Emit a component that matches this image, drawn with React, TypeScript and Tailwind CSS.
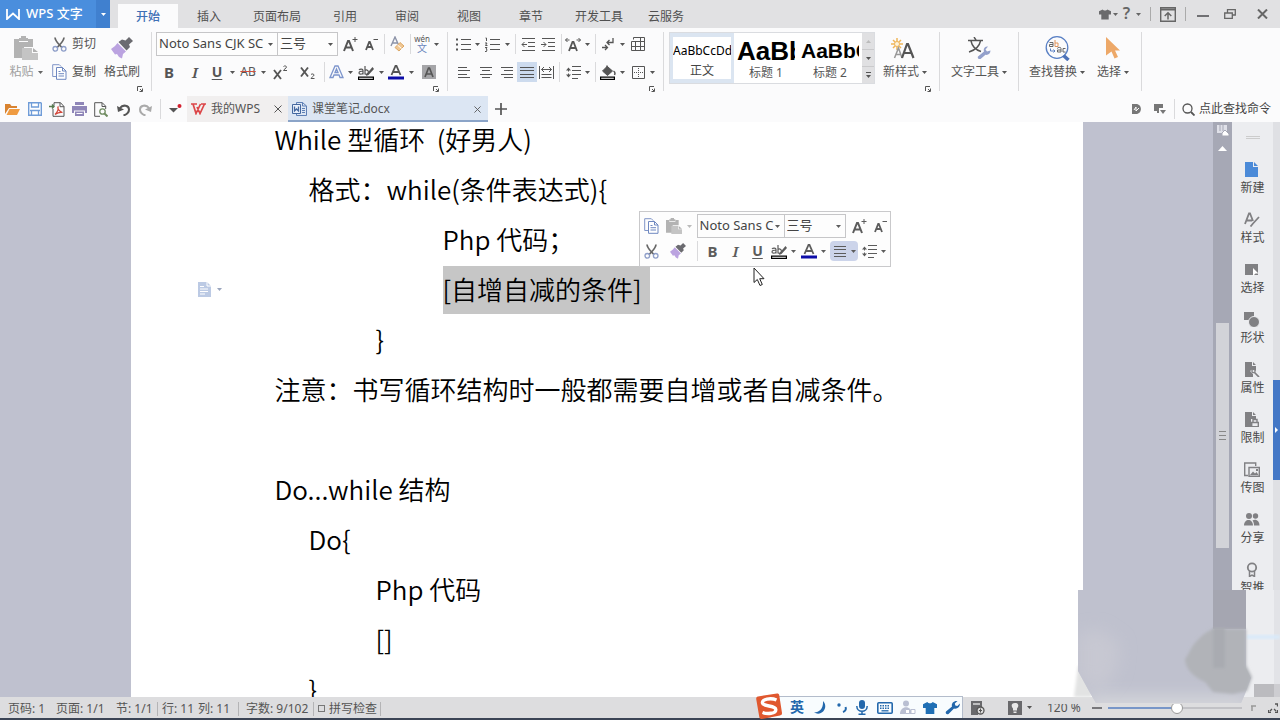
import React from "react";
import type { ReactNode } from "react";

const UI = "font-['Noto_Sans','Noto_Sans_CJK_SC',sans-serif]";

function Svg({ w = 16, h = 16, children, className = "" }: { w?: number; h?: number; children: ReactNode; className?: string }) {
  return (
    <svg width={w} height={h} viewBox={`0 0 ${w} ${h}`} fill="none" stroke="currentColor" className={`shrink-0 ${className}`} aria-hidden="true">
      {children}
    </svg>
  );
}

function Caret({ className = "" }: { className?: string }) {
  return (
    <Svg w={5} h={3} className={className}>
      <path d="M0 0h5L2.5 3z" fill="currentColor" stroke="none" />
    </Svg>
  );
}

function Tool({ label, w, children, className = "" }: { label: string; w: string; children: ReactNode; className?: string }) {
  return (
    <button type="button" aria-label={label} className={`flex h-5 shrink-0 items-center justify-center ${w} ${className}`}>
      {children}
    </button>
  );
}

function Drop({ label, w }: { label: string; w: string }) {
  return (
    <Tool label={label} w={w}>
      <Caret />
    </Tool>
  );
}

function Sep({ w }: { w: string }) {
  return (
    <span className={`flex h-5 shrink-0 justify-center ${w}`}>
      <span className="h-5 w-px bg-[#dadadc]" />
    </span>
  );
}

function GroupLine() {
  return <span className="mt-1 h-[59px] w-px shrink-0 bg-[#dadadc]" />;
}

function Launcher({ label }: { label: string }) {
  return (
    <button type="button" aria-label={label} className="absolute right-2 bottom-1">
      <Svg w={6} h={6}>
        <path d="M.5 5V.5H5M5.500 2.500v3h-3M3 3l2 2" strokeWidth="1" />
      </Svg>
    </button>
  );
}

/* ---------- icons ---------- */

const ScissorsIcon = ({ s = 15 }: { s?: number }) => (
  <svg width={s} height={s} viewBox="0 0 15 15" fill="none" aria-hidden="true">
    <path d="M3 .5c.3 2.500 2 5 4.500 7.500l2.500 2.600M12 .5c-.3 2.500-2 5-4.500 7.500L5 10.600" stroke="#666" strokeWidth="1.700" />
    <circle cx="3.300" cy="11.800" r="2.300" stroke="#8f9fc9" strokeWidth="1.300" />
    <circle cx="11.700" cy="11.800" r="2.300" stroke="#8f9fc9" strokeWidth="1.300" />
  </svg>
);

const CopyIcon = () => (
  <Svg w={15} h={16}>
    <path d="M4 12.500H.7V.7h6.600l2 2" stroke="#8096c8" />
    <path d="M4.500 3.500h6l3.500 3.500v8.300H4.500z" fill="#fff" stroke="#6f88c0" />
    <path d="M10.500 3.500V7H14M6.500 7.500h2M6.500 9.700h5.500M6.500 12h5.500" stroke="#6f88c0" />
  </Svg>
);

const PasteIcon = ({ s = 24 }: { s?: number }) => (
  <svg width={s} height={s} viewBox="0 0 24 24" aria-hidden="true">
    <path d="M0 3h5v3h9V3h5v8h-9v11H0z" fill="#b3b3b3" />
    <path d="M7 0h5v2h2v3H5V2h2z" fill="#b3b3b3" />
    <path d="M8 12h10v5h6v7H8z" fill="#c4c4c4" />
    <path d="M19 12l5 4h-5z" fill="#b0b0b0" />
  </svg>
);

const BrushIcon = ({ s = 22 }: { s?: number }) => (
  <svg width={s} height={s} viewBox="0 0 22 22" aria-hidden="true">
    <path d="M18 0l4 4-4 3.500 1 2.500-3.500 3.500L7.500 5l3.500-2.500 3.500 1z" fill="#6b6b70" />
    <path d="M6.500 6l8.500 8.500-3 2.500-1 4.500-3-1.500-2-3-2 .5L0 12l4-3z" fill="#bba3e0" />
  </svg>
);

const Lines = ({ d }: { d: string }) => (
  <Svg w={14} h={13}>
    <path d={d} strokeWidth="1" />
  </Svg>
);

const EraserIcon = () => (
  <Svg w={15} h={16}>
    <path d="M1 10L5 1l4 9M2.500 7h5" stroke="#8c93a8" strokeWidth="1.400" />
    <path d="M10 6.500l4 3.500-5 5-4-3.500z" fill="#f1c894" stroke="#dba868" />
    <path d="M7.500 9l4 3.500" stroke="#fff" />
  </Svg>
);

const LineSpacing = () => (
  <Svg w={15} h={13}>
    <path d="M6 .5h9M6 4.500h9M6 8.500h9M6 12.500h6" />
    <path d="M0 4.500L2.500 1.500 5 4.500M0 8.500l2.500 3L5 8.500" fill="currentColor" stroke="none" />
    <path d="M2.500 3.500v2M2.500 7.500v2" />
  </Svg>
);

const GrowIcon = () => (
  <Svg w={15} h={16}>
    <path d="M1 15L5 5h1l4 10M2.500 11.500h6" strokeWidth="2" />
    <path d="M9.500 3.500h5M12 1v5" />
  </Svg>
);

const ShrinkIcon = () => (
  <Svg w={13} h={14}>
    <path d="M1 13L4.200 5h.6L8 13M2 10h5" strokeWidth="1.800" />
    <path d="M8.500 2.500H13" />
  </Svg>
);

const HighlightIcon = () => (
  <Svg w={16} h={15}>
    <path d="M1 5c1-1.300 4-1.300 4 .6V9.500M5 6.300C2.500 6 1 6.700 1 8s3 1.800 4 0M7 1v8.500M7 5.500c1-1 3.400-.6 3.400 1.500S8.500 10 7 8.800" strokeWidth="1.200" />
    <path d="M14.500 2L9 8.500 8 11l2.500-1L16 4z" fill="currentColor" stroke="none" />
    <path d="M.6 12.100h14.800v2.300H.6z" fill="#fff" stroke="#000" strokeWidth="1.200" />
  </Svg>
);

const FontColorIcon = () => (
  <Svg w={16} h={15}>
    <path d="M3.500 10L7.500 1h1l4 9M5 7h6" strokeWidth="1.800" />
    <path d="M0 11.500h16v3H0z" fill="#0d0da8" stroke="none" />
  </Svg>
);

const CloseIcon = ({ s = 8 }: { s?: number }) => (
  <svg width={s} height={s} viewBox="0 0 8 8" stroke="currentColor" aria-hidden="true">
    <path d="M.5.5l7 7M7.500.5l-7 7" />
  </svg>
);

const ShirtIcon = ({ color, s = 13 }: { color: string; s?: number }) => (
  <svg width={s} height={s} viewBox="0 0 13 13" aria-hidden="true">
    <path d="M4 1c1 1.500 4 1.500 5 0l4 2v3.500h-2.500V12h-8V6.500H0V3z" fill={color} />
  </svg>
);

/* ---------- title bar ---------- */

const menuTabs = [
  { t: "插入", w: "w-[62px]" },
  { t: "页面布局", w: "w-[74px]" },
  { t: "引用", w: "w-[62px]" },
  { t: "审阅", w: "w-[62px]" },
  { t: "视图", w: "w-[62px]" },
  { t: "章节", w: "w-[62px]" },
  { t: "开发工具", w: "w-[74px]" },
  { t: "云服务", w: "w-[60px]" },
];

function TitleBar() {
  return (
    <header className="flex h-7 shrink-0 items-stretch bg-[#e1e1e3] text-[#505050]">
      <button type="button" className="flex w-24 items-center gap-1.5 bg-[#4a8edd] pl-1.5 text-[13px] font-medium text-white">
        <Svg w={14} h={11}>
          <path d="M1 0v10l6-5.500L13 10V0" strokeWidth="1.800" />
        </Svg>
        WPS 文字
      </button>
      <button type="button" aria-label="应用菜单" className="flex w-3.5 items-center justify-center bg-[#4080cf] text-white">
        <Caret />
      </button>
      <nav className="ml-2 flex items-stretch">
        <button type="button" className="mt-1 w-[60px] bg-[#fbfbfc] pt-0.5 font-medium text-[#3e6fb5]">开始</button>
        {menuTabs.map((m) => (
          <button key={m.t} type="button" className={`mt-1 pt-0.5 ${m.w}`}>
            {m.t}
          </button>
        ))}
      </nav>
      <div className="ml-auto flex items-center pr-1 text-[#666]">
        <Tool label="皮肤" w="w-3"><ShirtIcon color="#6a6a6c" /></Tool>
        <Drop label="皮肤选项" w="w-2" />
        <Tool label="帮助" w="w-[15px]" className="text-[16px] font-semibold">?</Tool>
        <Drop label="帮助选项" w="w-2" />
        <span className="mx-2 h-3.5 w-px bg-[#aaa]" />
        <Tool label="隐藏功能区" w="w-[18px]">
          <Svg w={16} h={15}>
            <path d="M.7.700h14.600v13.600H.7z" strokeWidth="1.400" />
            <path d="M.7 2.500h14.600" strokeWidth="2" />
            <path d="M8 12.500V6M4.700 9L8 5.800 11.300 9" strokeWidth="1.500" />
          </Svg>
        </Tool>
        <span className="mx-2 h-3.5 w-px bg-[#aaa]" />
        <Tool label="最小化" w="w-[18px]">
          <span className="mt-1 h-0.5 w-3 bg-[#707073]" />
        </Tool>
        <Tool label="还原" w="w-9">
          <Svg w={12} h={10}>
            <path d="M.7 4h7.600v5.300H.7zM3.500 4V.7h7.800V6H8.500" strokeWidth="1.300" />
          </Svg>
        </Tool>
        <Tool label="关闭" w="w-7">
          <Svg w={11} h={10}>
            <path d="M1 .5l9 9M10 .5l-9 9" strokeWidth="2" />
          </Svg>
        </Tool>
      </div>
    </header>
  );
}

/* ---------- ribbon ---------- */

function ClipboardGroup() {
  return (
    <div className="relative flex h-full w-[151px] shrink-0 pt-1.5 pl-2">
      <button type="button" className="flex w-9 flex-col items-center text-[#a0a0a0]">
        <span className="flex h-7 items-center"><PasteIcon /></span>
        <span className="flex items-center gap-1 whitespace-nowrap leading-5">
          粘贴 <Caret className="text-[#666]" />
        </span>
      </button>
      <div className="ml-2 flex flex-col gap-2">
        <button type="button" className="flex h-5 items-center gap-[5px] whitespace-nowrap"><ScissorsIcon />剪切</button>
        <button type="button" className="flex h-5 items-center gap-[5px] whitespace-nowrap"><CopyIcon />复制</button>
      </div>
      <button type="button" className="ml-2 flex flex-col items-center whitespace-nowrap">
        <span className="flex h-7 items-center"><BrushIcon /></span>
        <span className="leading-5">格式刷</span>
      </button>
      <Launcher label="剪贴板设置" />
    </div>
  );
}

function Combo({ label, value, w }: { label: string; value: string; w: string }) {
  return (
    <span className={`relative flex h-6 shrink-0 items-center border border-[#c6c6c8] bg-[#fdfdfd] ${w}`}>
      <select aria-label={label} className="h-full w-full appearance-none overflow-hidden bg-transparent pr-2.5 pl-0.5 text-[13px] text-[#444]">
        <option>{value}</option>
      </select>
      <Caret className="pointer-events-none absolute right-1" />
    </span>
  );
}

const glyph = "font-bold text-[15px] leading-none";

function FontGroup() {
  return (
    <div className="relative flex h-full w-[295px] shrink-0 flex-col gap-1.5 pt-1 pl-1">
      <div className="flex h-6 items-center">
        <Combo label="字体" value="Noto Sans CJK SC" w="w-[122px]" />
        <Combo label="字号" value="三号" w="-ml-px w-[61px]" />
        <Tool label="增大字号" w="w-6"><GrowIcon /></Tool>
        <Tool label="减小字号" w="w-[18px]"><ShrinkIcon /></Tool>
        <Sep w="w-2" />
        <Tool label="清除格式" w="w-[18px]"><EraserIcon /></Tool>
        <Sep w="w-2" />
        <Tool label="拼音指南" w="w-4" className="flex-col text-[8px]">
          <span className="leading-[8px]">wén</span>
          <span className="text-[10px] leading-[11px] text-[#6c86bd]">文</span>
        </Tool>
        <Drop label="拼音选项" w="w-3" />
      </div>
      <div className="flex h-5 items-center">
        <Tool label="加粗" w="w-[26px]" className={glyph}>B</Tool>
        <Tool label="倾斜" w="w-[26px]" className="font-['Noto_Serif','Liberation_Serif',serif] text-[15px] font-semibold italic">I</Tool>
        <Tool label="下划线" w="w-[18px]" className="text-[14px] font-bold underline underline-offset-2">U</Tool>
        <Drop label="下划线选项" w="w-3" />
        <Tool label="删除线" w="w-5" className="text-[12px] line-through decoration-[#d05040]">AB</Tool>
        <Drop label="删除线选项" w="w-2.5" />
        <Tool label="上标" w="w-6">
          <Svg w={15} h={15}>
            <path d="M1 5l7 9M8 5l-7 9" strokeWidth="1.900" />
            <path d="M10.500 1.500c1-1 3-.6 3 .6 0 1-3 2.500-3 3.400h3.500" />
          </Svg>
        </Tool>
        <Tool label="下标" w="w-[30px]">
          <Svg w={15} h={15}>
            <path d="M1 2.500l7 9M8 2.500l-7 9" strokeWidth="1.900" />
            <path d="M11 9.500c1-1 3-.6 3 .6 0 1-3 2.500-3 3.400h3.500" />
          </Svg>
        </Tool>
        <Sep w="w-1" />
        <Tool label="文字效果" w="w-5">
          <Svg w={15} h={14}>
            <path d="M1 12.500L6 1h3l5 11.500h-3l-1-2.500H5l-1 2.500zM6 7.500L7.500 4 9 7.500z" stroke="#7d95cc" strokeWidth="1.300" />
          </Svg>
        </Tool>
        <Drop label="文字效果选项" w="w-2" />
        <Tool label="突出显示" w="w-6"><HighlightIcon /></Tool>
        <Drop label="突出显示选项" w="w-[6px]" />
        <Tool label="字体颜色" w="w-6"><FontColorIcon /></Tool>
        <Drop label="字体颜色选项" w="w-[6px]" />
        <Tool label="字符底纹" w="w-[30px]">
          <Svg w={14} h={14}>
            <path d="M0 0h14v14H0z" fill="#a5a5a8" stroke="none" />
            <path d="M3 12L6.500 3h1L11 12M4.500 9h5" strokeWidth="1.700" />
          </Svg>
        </Tool>
      </div>
      <Launcher label="字体设置" />
    </div>
  );
}

function ParagraphGroup() {
  return (
    <div className="relative flex h-full w-[215px] shrink-0 flex-col gap-2 pt-1.5 pl-[5px]">
      <div className="flex h-5 items-center">
        <Tool label="项目符号" w="w-5">
          <Svg w={15} h={13}>
            <path d="M5 1.500h10M5 6.500h10M5 11.500h10" />
            <path d="M0 .5h2v2H0zM0 5.500h2v2H0zM0 10.500h2v2H0z" fill="currentColor" stroke="none" />
          </Svg>
        </Tool>
        <Drop label="项目符号选项" w="w-2" />
        <Tool label="编号" w="w-[22px]">
          <Svg w={15} h={15}>
            <path d="M5 2.500h10M5 7.500h10M5 12.500h10" />
            <path d="M.5 1h1v3M0 6h2L.5 8.500H2.500M0 10.500h2L1 12l1 .5-.5 2H0" />
          </Svg>
        </Tool>
        <Drop label="编号选项" w="w-2" />
        <Sep w="w-2" />
        <Tool label="减少缩进" w="w-[18px]">
          <Lines d="M1 .5h13M7 4.500h7M7 8.500h7M1 12.500h13M1 6.500h5M3.500 4L1 6.500 3.500 9" />
        </Tool>
        <Tool label="增加缩进" w="w-[22px]">
          <Lines d="M1 .5h13M7 4.500h7M7 8.500h7M1 12.500h13M0 6.500h5M2.500 4L5 6.500 2.500 9" />
        </Tool>
        <Sep w="w-1" />
        <Tool label="中文版式" w="w-5">
          <Svg w={16} h={15}>
            <path d="M4 14L7.500 5h1L12 14M5.500 11h5" strokeWidth="1.800" />
            <path d="M.5 3h4M2.500 1L.5 3l2 2M15.500 3h-4M13.500 1l2 2-2 2" />
          </Svg>
        </Tool>
        <Drop label="中文版式选项" w="w-2" />
        <Sep w="w-2" />
        <Tool label="显示标记" w="w-[18px]">
          <Svg w={12} h={13}>
            <path d="M11 0v4.500H5M7.500 2L5 4.500 7.500 7M0 9.500h5M3 7l2.500 2.500L3 12" strokeWidth="1.300" />
          </Svg>
        </Tool>
        <Drop label="显示标记选项" w="w-2.5" />
        <Tool label="制表位" w="w-[22px]">
          <Svg w={14} h={14}>
            <path d="M2.500 2.500V.5h11v13H.5v-9h13M4.500 4.500v9M9.500.5v13M.5 9.500h13" />
          </Svg>
        </Tool>
      </div>
      <div className="flex h-5 items-center">
        <Tool label="左对齐" w="w-[22px]"><Lines d="M1 1.500h9M1 4.500h12M1 8.500h9M1 11.500h12" /></Tool>
        <Tool label="居中" w="w-[22px]"><Lines d="M1 1.500h12M3 4.500h8M1 8.500h12M3 11.500h8" /></Tool>
        <Tool label="右对齐" w="w-5"><Lines d="M1 1.500h12M4 4.500h9M1 8.500h12M4 11.500h9" /></Tool>
        <Tool label="两端对齐" w="w-5" className="bg-[#cddbee]"><Lines d="M0 1.500h14M0 4.500h14M0 8.500h14M0 11.500h14" /></Tool>
        <Tool label="分散对齐" w="w-[18px]">
          <Svg w={15} h={13}>
            <path d="M.5 0v13M14.500 0v13M2.500 3.500h10M5 1L2.500 3.500 5 6M10 1l2.500 2.500L10 6M2.500 8.500h10M2.500 11.500h10" />
          </Svg>
        </Tool>
        <Sep w="w-2" />
        <Tool label="行距" w="w-5"><LineSpacing /></Tool>
        <Drop label="行距选项" w="w-2" />
        <Sep w="w-2" />
        <Tool label="底纹颜色" w="w-[18px]">
          <Svg w={16} h={15}>
            <path d="M7 1.500L2.500 6l5 4.500 5-4.500L8 2z" fill="currentColor" />
            <path d="M7 4V.5M13.500 6c1.500 1 1.500 3 1 4" strokeWidth="1.500" />
            <path d="M.6 12.100h13.800v2.300H.6z" fill="#fff" stroke="#000" strokeWidth="1.200" />
          </Svg>
        </Tool>
        <Drop label="底纹颜色选项" w="w-2.5" />
        <Tool label="边框" w="w-[22px]">
          <Svg w={13} h={13}>
            <path d="M.5.500h12v12H.5z" />
            <path d="M6.500 2v10M2 6.500h10" strokeDasharray="1 1" />
          </Svg>
        </Tool>
        <Drop label="边框选项" w="w-[6px]" />
      </div>
      <Launcher label="段落设置" />
    </div>
  );
}

function StylesGroup() {
  return (
    <div className="relative flex h-full w-[275px] shrink-0 pt-1 pl-[5px]">
      <div className="flex h-[52px] border border-[#dadce0] bg-white">
        <button type="button" className="flex w-16 flex-col items-center overflow-hidden border-x-[3px] border-y-4 border-[#dbe5f1] text-[#444]">
          <span className="w-full overflow-hidden whitespace-nowrap text-left leading-[28px] text-black">AaBbCcDd</span>
          <span className="leading-4">正文</span>
        </button>
        <button type="button" className="flex w-16 flex-col items-center px-[3px] text-[#555]">
          <span className="h-8 w-full overflow-hidden text-left font-['Liberation_Sans',Arial,sans-serif] text-[26px] leading-9 font-bold text-black">AaBb</span>
          <span className="leading-4">标题 1</span>
        </button>
        <button type="button" className="flex w-16 flex-col items-center px-[3px] text-[#555]">
          <span className="h-8 w-full overflow-hidden text-left font-['Liberation_Sans',Arial,sans-serif] text-[21px] leading-9 font-bold text-black">AaBbC</span>
          <span className="leading-4">标题 2</span>
        </button>
        <div className="flex w-3 flex-col bg-[#e0e0e2]">
          <button type="button" aria-label="上一行" className="flex flex-1 items-center justify-center text-[#bbb]"><Caret className="rotate-180" /></button>
          <button type="button" aria-label="下一行" className="flex flex-1 items-center justify-center border-y border-[#cacacc]"><Caret /></button>
          <button type="button" aria-label="更多样式" className="flex flex-1 flex-col items-center justify-center gap-0.5">
            <span className="h-px w-[5px] bg-[#555]" />
            <Caret />
          </button>
        </div>
      </div>
      <button type="button" className="ml-1 flex flex-col items-center whitespace-nowrap">
        <span className="mt-0.5 flex h-7 items-center">
          <Svg w={24} h={22}>
            <path d="M6 1v12M0 7h12M2 3l8 8M10 3l-8 8" stroke="#f0b659" strokeWidth="1.500" />
            <circle cx="6" cy="7" r="2.500" fill="#fdf3dc" stroke="#f0b659" />
            <path d="M3.500 21L7.500 11l3.500 10M5 17.500h5" stroke="#999" strokeWidth="1.500" />
            <path d="M11 21l5-14h1l5.500 14M12.500 16h8" strokeWidth="2.200" />
          </Svg>
        </span>
        <span className="flex items-center gap-[3px] pl-1 leading-5">新样式<Caret /></span>
      </button>
      <Launcher label="样式设置" />
    </div>
  );
}

function BigButton({ text, icon, w }: { text: string; icon: ReactNode; w: string }) {
  return (
    <button type="button" className={`flex shrink-0 flex-col items-center whitespace-nowrap pt-1.5 ${w}`}>
      <span className="flex h-7 items-center">{icon}</span>
      <span className="flex items-center gap-[3px] leading-5">{text}<Caret /></span>
    </button>
  );
}

function Ribbon() {
  return (
    <section className="flex h-[68px] shrink-0 overflow-hidden bg-[#fbfbfc] text-[#555]">
      <ClipboardGroup />
      <GroupLine />
      <FontGroup />
      <GroupLine />
      <ParagraphGroup />
      <GroupLine />
      <StylesGroup />
      <GroupLine />
      <BigButton
        text="文字工具"
        w="w-[78px]"
        icon={
          <Svg w={24} h={22}>
            <path d="M1 3.500h15M7 0l2 3M13.500 4c-1 5-5 9-11.500 11M4 4c1 5 5 9 10 10.500" strokeWidth="1.400" />
            <path d="M11 19.500l6-5c-1-3 1-5.500 4-5l-2.500 3 1.500 2 3.500-1c0 3-2.500 5-5 4.300l-5 4.200c-1.500 1-3.500-1-2.500-2.500z" fill="#93a0cb" stroke="none" />
          </Svg>
        }
      />
      <GroupLine />
      <BigButton
        text="查找替换"
        w="w-[76px]"
        icon={
          <Svg w={25} h={25}>
            <circle cx="12" cy="11.500" r="10.800" stroke="#587fc4" strokeWidth="1.300" />
            <path d="M18.500 19.500l5 4.500" stroke="#4e73b8" strokeWidth="3.500" />
            <path d="M4.500 6.500h3.500v4H4.500V8.500H8M12.500 12.500c-.5-1.500 4-1.500 3.500 0v3.500h-3.500v-2H16M20.500 12.500H18V16h2.500" stroke="#666" />
            <path d="M10 4v6.500h3V7h-3" stroke="#e2955c" />
            <path d="M5.500 12.500v2.500H10M8.500 13.500L10 15l-1.500 1.500" stroke="#587fc4" />
          </Svg>
        }
      />
      <BigButton
        text="选择"
        w="w-[36px]"
        icon={
          <Svg w={14} h={22}>
            <path d="M0 0l14 13.500H9l3 6.500-3.500 1.500-3-7L0 18.500z" fill="#eda868" stroke="none" />
          </Svg>
        }
      />
      <span className="w-2.5 shrink-0" />
      <GroupLine />
    </section>
  );
}

/* ---------- quick access + document tabs ---------- */

function QuickBar() {
  return (
    <section className="flex h-[26px] shrink-0 items-stretch bg-[#fbfbfc] text-[#555]">
      <div className="flex items-center pl-px">
        <Tool label="打开" w="w-[23px]">
          <Svg w={15} h={12}>
            <path d="M0 11V1h5l1.500 2H12v2H4z" fill="#d98330" stroke="none" />
            <path d="M1.500 12L4.500 6H15l-3 6z" fill="#ef9b42" stroke="none" />
          </Svg>
        </Tool>
        <Tool label="保存" w="w-[22px]">
          <Svg w={14} h={14}>
            <path d="M.7.700h12l.6.600v12H.7z" fill="#fff" stroke="#6f9cd8" strokeWidth="1.400" />
            <path d="M3.500 1v4h7V1M2 8.500h10M3.500 8.500V13M10.500 8.500V13" stroke="#6f9cd8" strokeWidth="1.300" />
          </Svg>
        </Tool>
        <Tool label="输出为PDF" w="w-[22px]">
          <Svg w={16} h={15}>
            <path d="M4 7v7.300h11V4.500L11.500.7H5v3" />
            <path d="M11 .7v4h4" />
            <path d="M0 4.500h5M3 2.500l2 2-2 2" stroke="#567a50" strokeWidth="1.400" />
            <path d="M6 12.500c2-2 3.500-5.500 3-7.500-1 1 1.500 5 4.500 5.500-2-.5-5 .3-7.500 2" stroke="#d3473a" strokeWidth="1.200" />
          </Svg>
        </Tool>
        <Tool label="打印" w="w-[22px]">
          <Svg w={15} h={14}>
            <path d="M3 0h9v3H3zM0 4h15v7h-2V8.500H2V11H0zM3 9.500h9V14H3z" fill="#8f86b8" stroke="none" />
            <path d="M4.500 11.500h6" stroke="#fff" />
          </Svg>
        </Tool>
        <Tool label="打印预览" w="w-[22px]">
          <Svg w={14} h={15}>
            <path d="M6 14.300H.7V.7h7.500l3.500 3.500V7" />
            <path d="M8 .7v3.800h3.700" />
            <circle cx="8.500" cy="9.500" r="2.700" stroke="#718d62" strokeWidth="1.300" />
            <path d="M10.500 11.500L13.500 14.500" stroke="#718d62" strokeWidth="2" />
          </Svg>
        </Tool>
        <Tool label="撤销" w="w-[22px]">
          <Svg w={13} h={13}>
            <path d="M3 5c3-4 9-2.500 9 1.500 0 3-2.500 5-5.500 6" strokeWidth="2" />
            <path d="M0 3l1 6 6-2.500z" fill="currentColor" stroke="none" />
          </Svg>
        </Tool>
        <Tool label="恢复" w="w-[22px]" className="text-[#aaa]">
          <Svg w={13} h={13}>
            <path d="M10 5C7 1 1 2.500 1 6.500c0 3 2.500 5 5.500 6" strokeWidth="2" />
            <path d="M13 3l-1 6-6-2.500z" fill="currentColor" stroke="none" />
          </Svg>
        </Tool>
        <Sep w="w-2" />
        <Tool label="自定义快速访问" w="w-[23px]">
          <Svg w={13} h={10}>
            <path d="M0 4h9L4.500 8.500z" fill="currentColor" stroke="none" />
            <circle cx="10.500" cy="2" r="2" fill="#d3202f" stroke="none" />
          </Svg>
        </Tool>
      </div>
      <div className="flex w-[101px] items-center bg-[#f1efef] pl-1">
        <Svg w={16} h={12}>
          <path d="M0 1h6M10 1h5M2 1l3 9.500L9.500 1M6 4l3 6.500L13.500 1" stroke="#dc4648" strokeWidth="1.700" />
        </Svg>
        <a href="#wps" className="ml-1 flex-1 whitespace-nowrap">我的WPS</a>
        <button type="button" aria-label="关闭我的WPS" className="mr-1.5"><CloseIcon /></button>
      </div>
      <div className="flex w-[200px] items-center border-b-2 border-[#8ba4c8] bg-[#dce6f3] pt-0.5 pl-1">
        <Svg w={15} h={14}>
          <path d="M4.500 2.500V.5h6l4 3.500v9.500h-10v-2M10.500.5V4h4M10 6.500h3M10 8.500h3M10 10.500h3" stroke="#5d7fb5" />
          <path d="M.5 2.500h8v9h-8z" fill="#eaf1fb" stroke="#44689f" />
          <path d="M2.500 4.500v4.500l2-2 2 2V4.500" stroke="#44689f" strokeWidth="1.300" />
        </Svg>
        <a href="#doc" className="ml-[5px] flex-1 whitespace-nowrap">课堂笔记.docx</a>
        <button type="button" aria-label="关闭文档" className="mr-[7px]"><CloseIcon s={7} /></button>
      </div>
      <Tool label="新建标签" w="w-[26px]" className="self-center">
        <Svg w={12} h={12}><path d="M6 0v12M0 6h12" strokeWidth="1.700" /></Svg>
      </Tool>
      <div className="ml-auto flex items-center pr-[7px]">
        <Tool label="云文档" w="w-7">
          <Svg w={9} h={10}>
            <path d="M0 0h4c6.500 0 6.500 10 0 10H0z" fill="#777" stroke="none" />
            <path d="M2 6l2-3v4l3-3" stroke="#fff" />
          </Svg>
        </Tool>
        <Tool label="同步" w="w-5">
          <Svg w={12} h={11}>
            <path d="M0 0h9v4H5v5H3V7H0zM6 6h6l-3 4z" fill="#777" stroke="none" />
          </Svg>
        </Tool>
        <Sep w="w-2" />
        <label className="flex items-center gap-1 pl-1">
          <Svg w={13} h={13}>
            <circle cx="5.500" cy="5.500" r="4.500" strokeWidth="1.300" />
            <path d="M9 9l3.500 3.500" strokeWidth="1.800" />
          </Svg>
          <input aria-label="查找命令" placeholder="点此查找命令" className="w-[74px] bg-transparent outline-none placeholder:text-[#444]" />
        </label>
      </div>
    </section>
  );
}

/* ---------- document ---------- */

function MiniToolbar() {
  return (
    <div className="absolute top-[89px] left-[508px] flex w-[252px] flex-col gap-0.5 border border-[#c9c9cb] bg-[#fdfdfd] pt-0.5 pb-1 text-xs font-normal text-[#5c5c5c]">
      <div className="flex h-6 items-center">
        <Tool label="复制" w="w-6"><CopyIcon /></Tool>
        <Tool label="粘贴" w="w-5"><PasteIcon s={16} /></Tool>
        <span className="flex w-3 justify-center text-[#bbb]"><Caret /></span>
        <Combo label="浮动字体" value="Noto Sans C" w="ml-px w-[88px]" />
        <Combo label="浮动字号" value="三号" w="-ml-px w-[62px]" />
        <Tool label="增大字号" w="w-6" className="ml-0.5"><GrowIcon /></Tool>
        <Tool label="减小字号" w="w-[18px]"><ShrinkIcon /></Tool>
      </div>
      <div className="flex h-[22px] items-center">
        <Tool label="剪切" w="w-6"><ScissorsIcon /></Tool>
        <Tool label="格式刷" w="w-7"><BrushIcon s={16} /></Tool>
        <Sep w="w-3" />
        <Tool label="加粗" w="w-[18px]" className={glyph}>B</Tool>
        <Tool label="倾斜" w="w-7" className="font-['Noto_Serif','Liberation_Serif',serif] text-[15px] font-semibold italic">I</Tool>
        <Tool label="下划线" w="w-4" className="text-[14px] font-bold underline underline-offset-2">U</Tool>
        <Tool label="突出显示" w="w-[26px]"><HighlightIcon /></Tool>
        <Drop label="突出显示选项" w="w-1" />
        <Tool label="字体颜色" w="w-[26px]"><FontColorIcon /></Tool>
        <Drop label="字体颜色选项" w="w-1" />
        <span className="ml-1 flex items-center rounded-sm bg-[#ccd4ea]">
          <Tool label="对齐" w="w-5"><Lines d="M1 1.500h12M1 4.500h12M1 8.500h12M1 11.500h12" /></Tool>
          <Drop label="对齐选项" w="w-2" />
        </span>
        <Tool label="行距" w="w-6"><LineSpacing /></Tool>
        <Drop label="行距选项" w="w-1" />
      </div>
      <Svg w={12} h={20} className="absolute top-[55px] left-[113px]">
        <path d="M1 1v14.500l3.300-3 2.700 6 2.300-1-2.600-5.800H11z" fill="#fff" stroke="#222" />
      </Svg>
    </div>
  );
}

function Page() {
  return (
    <main className={`relative w-full max-w-[952px] overflow-hidden bg-white ${UI}`}>
      <article className="-mt-2 pr-20 pl-36 font-['Noto_Sans_CJK_SC',sans-serif] text-[26px] leading-[50px] font-[350] whitespace-pre text-black">
        <p>While 型循环  (好男人)</p>
        <p className="pl-[34px]">格式：while(条件表达式){"{"}</p>
        <p className="pl-[168px]">Php 代码；</p>
        <p className="pl-[168px]">
          <span className="mt-0.5 inline-block h-12 bg-[#c6c6c6] pr-2 align-top leading-[46px]">[自增自减的条件]</span>
        </p>
        <p className="pl-[101px]">{"}"}</p>
        <p>注意：书写循环结构时一般都需要自增或者自减条件。</p>
        <p>&nbsp;</p>
        <p>Do...while 结构</p>
        <p className="pl-[34px]">Do{"{"}</p>
        <p className="pl-[101px]">Php 代码</p>
        <p className="pl-[101px]">[]</p>
        <p className="pl-[34px]">{"}"}</p>
      </article>
      <button type="button" aria-label="段落布局" className="absolute top-[160px] left-[67px] flex items-center gap-1.5 text-[#9aa5bd]">
        <Svg w={13} h={15}>
          <path d="M0 0h9l4 4v11H0z" fill="#bccae4" stroke="none" />
          <path d="M2 4.500h4M2 7h8M2 9.500h8M2 12h5M9 0v4h4" stroke="#fff" />
        </Svg>
        <Caret />
      </button>
      <MiniToolbar />
    </main>
  );
}

const sideItems: { t: string; icon: ReactNode }[] = [
  { t: "新建", icon: <path d="M1 0h8v5h5v10H1zM10 0l4 4h-4z" fill="#4b8ad8" stroke="none" /> },
  { t: "样式", icon: <path d="M1 12L5 1.500h1L9 9M2.500 8.500H8M15 5l-6 6.500-2.500 3" strokeWidth="1.800" /> },
  { t: "选择", icon: <><path d="M1 2h13v11H1z" fill="currentColor" stroke="none" /><path d="M9 6l5.500 5.500h-3l-2.500 2.500z" fill="#fff" stroke="none" /></> },
  { t: "形状", icon: <><path d="M0 0h10v8H0z" fill="currentColor" stroke="none" /><circle cx="10" cy="10" r="5.500" fill="currentColor" stroke="#ecedf0" /></> },
  { t: "属性", icon: <><path d="M1 0h7v4h4v5l-3-2-3 2 3 3v3H1zM9 0l3 3H9z" fill="currentColor" stroke="none" /><path d="M15 15l-4.500-4.500" strokeWidth="1.700" /><circle cx="9.500" cy="9" r="1.600" strokeWidth="1.300" /></> },
  { t: "限制", icon: <><path d="M1 0h7v4h4v3H7v8H1zM9 0l3 3H9z" fill="currentColor" stroke="none" /><path d="M7.700 10.500h6.600v4.200H7.700zM9 10V7.500h4V10" strokeWidth="1.400" /></> },
  { t: "传图", icon: <><path d="M4 13.500H.7V1h11v3" strokeWidth="1.400" /><path d="M5 5.500h10.300v8.800H5z" strokeWidth="1.400" /><path d="M6 13l3-3.500 2 2 1.500-1.500 2 3zM12 7h2v2h-2z" fill="currentColor" stroke="none" /></> },
  { t: "分享", icon: <><circle cx="5" cy="4" r="3" fill="currentColor" stroke="none" /><circle cx="11.500" cy="4" r="2.700" fill="currentColor" stroke="none" /><path d="M0 13.500C0 6 9 6 9 13.500zM10 13.500c0-2-.5-4-1.500-5C12 6.500 15.500 9 15.500 13.500z" fill="currentColor" stroke="none" /></> },
  { t: "智推", icon: <><circle cx="8" cy="5.500" r="4.200" strokeWidth="1.800" /><path d="M5.500 9v5.500l2.500-1.500 2.500 1.500V9" strokeWidth="1.500" /></> },
];

function ScrollBar() {
  return (
    <div className="flex w-[19px] shrink-0 flex-col items-center bg-[#a6a8b5] pt-0.5 text-white">
      <Tool label="导航" w="w-4" className="h-[14px]">
        <Svg w={12} h={12}>
          <path d="M0 0h10v8H0z" fill="#dfe0e8" stroke="none" />
          <path d="M3 0v6M6 0v6" stroke="#a6a8b5" />
          <path d="M5 11V8l3-3 4 4v2z" fill="#fff" stroke="#a6a8b5" />
        </Svg>
      </Tool>
      <button type="button" aria-label="向上滚动" className="mt-1 p-1">
        <Svg w={9} h={5}><path d="M0 5L4.500 0 9 5z" fill="#fff" stroke="none" /></Svg>
      </button>
      <div className="flex w-full flex-1 flex-col items-center">
        <span className="flex-[168]" />
        <span className="flex w-[13px] flex-[226] flex-col items-center justify-center gap-[3px] bg-[#d2d3d8]">
          <span className="h-px w-[7px] bg-[#888]" />
          <span className="h-px w-[7px] bg-[#888]" />
          <span className="h-px w-[7px] bg-[#888]" />
        </span>
        <span className="flex-[149]" />
      </div>
    </div>
  );
}

function SidePanel() {
  return (
    <>
      <aside className="flex w-[41px] shrink-0 flex-col items-center overflow-hidden bg-[#ecedf0] pt-3.5 text-[#555]">
        <span className="mb-[22px] h-[3px] w-3.5 shrink-0 border-y border-[#ccc]" />
        {sideItems.map((s) => (
          <button key={s.t} type="button" className="flex h-[50px] shrink-0 flex-col items-center text-[#808083]">
            <Svg w={16} h={15} className="mt-px">{s.icon}</Svg>
            <span className="mt-0.5 leading-[18px] text-[#4a4a4a]">{s.t}</span>
          </button>
        ))}
      </aside>
      <div className="flex w-[7px] shrink-0 flex-col bg-[#dfe0e4]">
        <span className="flex-[258]" />
        <button type="button" aria-label="展开面板" className="flex flex-[100] items-center justify-center bg-[#4377c6]">
          <Svg w={3} h={6}><path d="M0 0l3 3-3 3z" fill="#fff" stroke="none" /></Svg>
        </button>
        <span className="flex-[217]" />
      </div>
    </>
  );
}

/* ---------- status bar ---------- */

const Tick = () => <span className="h-3.5 w-px bg-[#b4b4b6]" />;

function InputMethodBar() {
  return (
    <div className="relative flex h-[22px] w-[192px] shrink-0 items-center self-end border-t border-r border-[#b3bccb] bg-[#f8fcfe] pl-[18px] text-[#2368ac]">
      <Svg w={28} h={26} className="absolute -top-1 -left-4">
        <path d="M3 3.500L22 .5c1.500 0 2 .5 2.300 2L27 20c0 1.500-.5 2-2 2.500L7 26c-1.500 0-2.500-.5-2.700-2L1.200 6c0-1.500.5-2.200 1.800-2.500z" fill="#e0582f" stroke="none" />
        <path d="M21.500 7C16 4.500 6.500 6 7.500 10s13 2 13.300 6.500c.2 4.500-8.800 4.500-13.300 3" stroke="#fff" strokeWidth="3.400" />
      </Svg>
      <Tool label="中英文切换" w="w-4" className="text-[14px] font-bold">英</Tool>
      <Tool label="全半角" w="w-[30px]">
        <Svg w={13} h={13}><path d="M9 0c6 6-1 16-9 11.500C6 11.500 9.500 7 9 0z" fill="currentColor" stroke="none" /></Svg>
      </Tool>
      <Tool label="标点" w="w-[14px]">
        <Svg w={10} h={11}>
          <circle cx="2" cy="3" r="1.700" fill="currentColor" stroke="none" />
          <path d="M8.500 5c.8 2 .2 4-2.500 5" strokeWidth="2" />
        </Svg>
      </Tool>
      <Tool label="语音" w="w-[26px]">
        <Svg w={12} h={15}>
          <rect x="3" y="0" width="6" height="9" rx="3" fill="currentColor" stroke="none" />
          <path d="M.8 6c0 7 10.400 7 10.400 0M6 11v3M2.500 14.200h7" strokeWidth="1.500" />
        </Svg>
      </Tool>
      <Tool label="软键盘" w="w-5">
        <Svg w={16} h={12}>
          <rect x=".8" y=".8" width="14.400" height="10.400" rx="1" strokeWidth="1.600" />
          <path d="M3 3.800h10M3 6.200h10" strokeWidth="1.500" strokeDasharray="1.500 1" />
          <path d="M4.500 8.800h7" strokeWidth="1.300" />
        </Svg>
      </Tool>
      <Tool label="用户" w="w-[26px]" className="text-[#b9bfd2]">
        <Svg w={16} h={15}>
          <circle cx="6" cy="3.500" r="3" fill="currentColor" stroke="none" />
          <path d="M0 14C0 5 12 5 12 14z" fill="currentColor" stroke="none" />
          <path d="M5.500 9.500h4v4h-4zM11 9.500h4v4h-4z" fill="#fff" />
        </Svg>
      </Tool>
      <Tool label="皮肤" w="w-[18px]"><ShirtIcon color="#1f6fb5" s={14} /></Tool>
      <Tool label="工具箱" w="w-[26px]">
        <Svg w={15} h={15}>
          <path d="M1 11.500l6-5C6 3 9 .5 12.500 1L9.800 3.500l.5 2 2 .5L15 3.500c0 3.500-3 6-6 5L3.500 14c-2 1-3.500-1-2.500-2.500z" fill="currentColor" stroke="none" />
        </Svg>
      </Tool>
    </div>
  );
}

function StatusBar() {
  return (
    <footer className="flex h-[23px] shrink-0 items-center border-b-2 border-[#3b4455] bg-[#dddddf] text-[#555]">
      <div className="flex items-center whitespace-nowrap pt-0.5 pl-2">
        <span className="w-12">页码: 1</span>
        <span className="w-[60px]">页面: 1/1</span>
        <span className="w-[41px]">节: 1/1</span>
        <Tick />
        <span className="w-10 pl-1">行: 11</span>
        <span className="w-10">列: 11</span>
        <Tick />
        <span className="w-[74px] pl-[7px]">字数: 9/102</span>
        <Tick />
        <label className="flex items-center gap-1 pr-[3px] pl-1">
          <input type="checkbox" className="size-[7px] appearance-none border border-[#777]" />
          拼写检查
        </label>
        <Tick />
      </div>
      <div className="ml-auto flex h-full items-center">
        <InputMethodBar />
        <Tool label="文档校对" w="w-[30px]">
          <Svg w={14} h={14}>
            <path d="M0 0h11v6H7v8H0z" fill="#69696c" stroke="none" />
            <path d="M2 3h7" stroke="#ddd" strokeWidth="1.500" />
            <circle cx="9.500" cy="9.500" r="3.500" strokeWidth="1.300" fill="#ddd" />
            <path d="M9.500 7.500v4M8 9.500h3" />
          </Svg>
        </Tool>
        <Tool label="护眼模式" w="w-11">
          <Svg w={14} h={14}>
            <path d="M0 0h14v14H0z" fill="#69696c" stroke="none" />
            <path d="M7 2c4 0 4 3.500 2 5.500v2H5v-2C3 5.500 3 2 7 2zM5.500 10.500h3V12h-3z" fill="#e8e8e8" stroke="none" />
          </Svg>
        </Tool>
        <Caret className="-ml-2.5" />
        <span className="w-[54px] pl-[15px] whitespace-nowrap">120 %</span>
        <Tool label="缩小" w="w-[22px]"><span className="h-0.5 w-2.5 bg-[#77777a]" /></Tool>
        <input
          type="range"
          aria-label="显示比例"
          min={0}
          max={100}
          defaultValue={52}
          className="h-4 w-[134px] appearance-none bg-[linear-gradient(to_right,#7896c8_52%,#c2c2c6_52%)] bg-[length:100%_2px] bg-center bg-no-repeat [&::-webkit-slider-thumb]:size-3 [&::-webkit-slider-thumb]:appearance-none [&::-webkit-slider-thumb]:rounded-full [&::-webkit-slider-thumb]:border [&::-webkit-slider-thumb]:border-[#999] [&::-webkit-slider-thumb]:bg-white"
        />
        <Tool label="放大" w="w-6">
          <Svg w={6} h={6}><path d="M0 1h5M1 1v5" stroke="#999" strokeWidth="1.500" /></Svg>
        </Tool>
        <Tool label="全屏" w="w-3.5">
          <Svg w={10} h={10}>
            <path d="M0 9.500h3M.5 10V7M10 9.500H7M9.500 10V7M2 8l2-2M8 8L6 6M7 1h2.500v2.500M3 1" strokeWidth="1.300" />
          </Svg>
        </Tool>
      </div>
    </footer>
  );
}

/* Smudged patch in the lower right corner, drawn above the page and side panel. */
function Smudge() {
  return (
    <svg width="240" height="130" viewBox="0 0 240 130" className="pointer-events-none absolute right-0 bottom-0" aria-hidden="true">
      <defs>
        <filter id="soft" x="-20%" y="-20%" width="140%" height="140%">
          <feGaussianBlur stdDeviation="1.500" />
        </filter>
        <filter id="softer" x="-50%" y="-50%" width="200%" height="200%">
          <feGaussianBlur stdDeviation="8" />
        </filter>
        <clipPath id="patch">
          <path d="M38 0h168v78l5 10-6 16-4 9H56l-6-10-12-22z" />
        </clipPath>
      </defs>
      <path d="M38 0h14v107H38z" fill="#fff" />
      <path d="M206 0h34v107h-34z" fill="#ecedf0" />
      <path d="M234 0h6v107h-6z" fill="#e2e3e7" />
      <path d="M206 45h34v4h-34z" fill="#d9eafa" filter="url(#soft)" />
      <path d="M214 94h20v13h-20z" fill="#bbbbbf" />
      <path d="M234 94h6v13h-6z" fill="#cdcdd1" />
      <path d="M4 107h202v7H4z" fill="#dddddf" />
      <path d="M38 76h14v31H34z" fill="#e2e3e3" filter="url(#soft)" />
      <g clipPath="url(#patch)">
        <path d="M38 0h175v125H38z" fill="#bfc1ce" />
        <path d="M173 0h33v39h-33z" fill="#a5a6b1" />
        <path d="M38 44l20-5 22 15-4 28-16 20-22-14z" fill="#c7c8d2" filter="url(#softer)" />
        <path d="M48 106h160v30H48z" fill="#d4d5da" filter="url(#softer)" />
      </g>
      <path d="M173 39h33v36l6 12-5 14-14 3-20-2-8-10c-12-5-20-14-20-23 4-5 6-12 10-16 4-5 10-11 18-14z" fill="#b1b3b8" filter="url(#soft)" />
      <path d="M173 38h12v40h-12z" fill="#a9abb1" filter="url(#soft)" />
    </svg>
  );
}

export default function App() {
  return (
    <div className={`relative flex h-screen min-h-0 flex-col overflow-hidden text-xs ${UI}`}>
      <TitleBar />
      <Ribbon />
      <QuickBar />
      <div className="flex min-h-0 flex-1">
        <div className="flex min-w-0 flex-1 justify-center overflow-hidden bg-[#bfc1cf]">
          <Page />
        </div>
        <ScrollBar />
        <SidePanel />
      </div>
      <StatusBar />
      <Smudge />
    </div>
  );
}
